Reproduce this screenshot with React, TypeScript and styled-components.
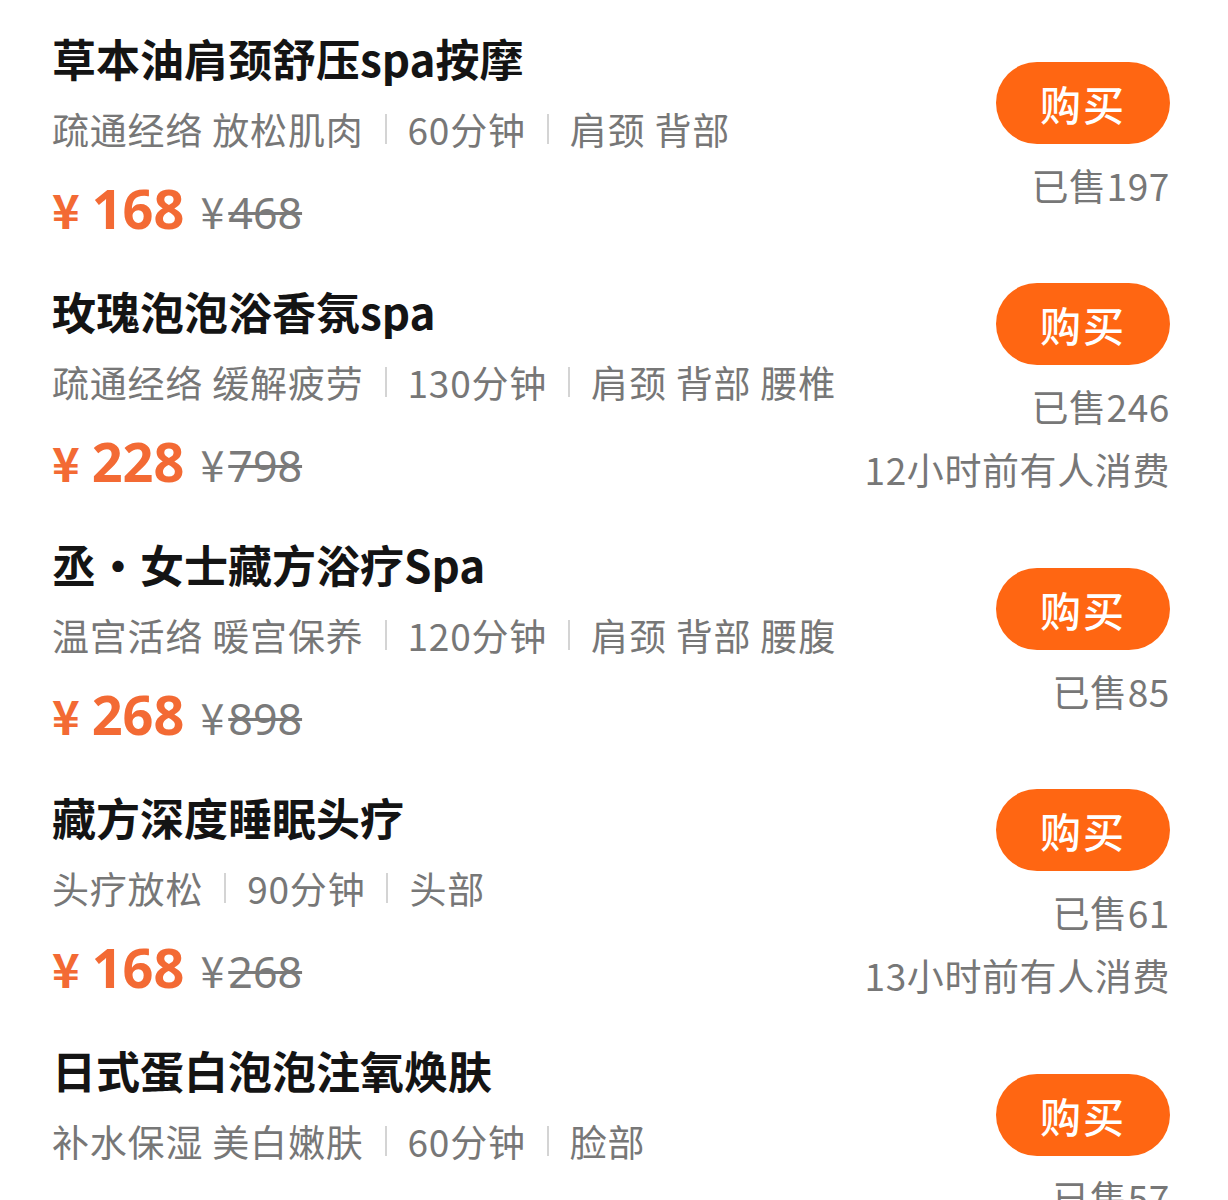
import React from "react";
import styled, { createGlobalStyle } from "styled-components";

const Global = createGlobalStyle`
  html, body { margin: 0; padding: 0; background: #fff; }
  body { font-family: "Noto Sans CJK SC", "Noto Sans", sans-serif; -webkit-font-smoothing: antialiased; }
`;

const List = styled.div`
  display: flex;
  flex-direction: column;
  gap: 45px;
  padding: 30px 58px 0 52px;
  width: 1228px;
  box-sizing: border-box;
  height: 1200px;
  overflow: hidden;
`;

const Item = styled.div`
  display: flex;
  align-items: center;
  justify-content: space-between;
`;

const Left = styled.div`
  display: flex;
  flex-direction: column;
`;

const Title = styled.div`
  font-size: 44px;
  font-weight: 700;
  color: #141414;
  line-height: 56px;
  white-space: nowrap;
`;

const Dot = styled.span`
  display: inline-block;
  width: 44px;
  text-align: center;
`;

const Tags = styled.div`
  margin-top: 18px;
  display: flex;
  align-items: center;
  font-size: 37px;
  letter-spacing: 0.8px;
  line-height: 50px;
  color: #777;
  white-space: nowrap;
`;

const Sep = styled.span`
  display: inline-block;
  width: 2px;
  height: 30px;
  background: #d4d4d4;
  margin: 0 21px;
`;

const PriceRow = styled.div`
  margin-top: 24px;
  display: flex;
  align-items: baseline;
  height: 60px;
  line-height: 60px;
`;

const Yen = styled.span`
  color: #f36a34;
  font-size: 47px;
  font-weight: 700;
  margin-right: 12px;
`;

const Price = styled.span`
  color: #f36a34;
  font-size: 54px;
  font-weight: 700;
  font-family: "Noto Sans", "Noto Sans CJK SC", sans-serif;
`;

const Orig = styled.span`
  margin-left: 16px;
  color: #7a7a7a;
  font-size: 43px;
`;

const OrigYen = styled.span`
  margin-right: 4px;
`;

const OrigNum = styled.span`
  text-decoration: line-through;
  text-decoration-thickness: 3px;
  font-family: "Noto Sans", "Noto Sans CJK SC", sans-serif;
`;

const Right = styled.div`
  display: flex;
  flex-direction: column;
  align-items: flex-end;
`;

const Buy = styled.button`
  width: 174px;
  height: 82px;
  border: none;
  border-radius: 41px;
  background: #ff6612;
  color: #fff;
  font-family: "Noto Sans CJK SC", sans-serif;
  font-size: 41px;
  font-weight: 500;
  letter-spacing: 2px;
  padding: 0;
  margin-bottom: 20px;
`;

const Meta = styled.div<{ $spaced?: boolean }>`
  font-size: 37px;
  letter-spacing: 0.6px;
  line-height: 43px;
  color: #777;
  white-space: nowrap;
  margin-top: ${(p) => (p.$spaced ? "20px" : "0")};
`;

type Data = {
  title: React.ReactNode;
  tags: string[];
  price: string;
  orig: string;
  sold: string;
  recent?: string;
};

const items: Data[] = [
  { title: "草本油肩颈舒压spa按摩", tags: ["疏通经络 放松肌肉", "60分钟", "肩颈 背部"], price: "168", orig: "468", sold: "197" },
  { title: "玫瑰泡泡浴香氛spa", tags: ["疏通经络 缓解疲劳", "130分钟", "肩颈 背部 腰椎"], price: "228", orig: "798", sold: "246", recent: "12小时前有人消费" },
  {
    title: (
      <>
        丞<Dot>•</Dot>女士藏方浴疗Spa
      </>
    ),
    tags: ["温宫活络 暖宫保养", "120分钟", "肩颈 背部 腰腹"],
    price: "268",
    orig: "898",
    sold: "85",
  },
  { title: "藏方深度睡眠头疗", tags: ["头疗放松", "90分钟", "头部"], price: "168", orig: "268", sold: "61", recent: "13小时前有人消费" },
  { title: "日式蛋白泡泡注氧焕肤", tags: ["补水保湿 美白嫩肤", "60分钟", "脸部"], price: "198", orig: "598", sold: "57" },
];

export default function App() {
  return (
    <>
      <Global />
      <List>
        {items.map((it, i) => (
          <Item key={i}>
            <Left>
              <Title>{it.title}</Title>
              <Tags>
                {it.tags.map((t, j) => (
                  <React.Fragment key={j}>
                    {j > 0 && <Sep />}
                    <span>{t}</span>
                  </React.Fragment>
                ))}
              </Tags>
              <PriceRow>
                <Yen>¥</Yen>
                <Price>{it.price}</Price>
                <Orig>
                  <OrigYen>¥</OrigYen>
                  <OrigNum>{it.orig}</OrigNum>
                </Orig>
              </PriceRow>
            </Left>
            <Right>
              <Buy>购买</Buy>
              <Meta>已售{it.sold}</Meta>
              {it.recent && <Meta $spaced>{it.recent}</Meta>}
            </Right>
          </Item>
        ))}
      </List>
    </>
  );
}
